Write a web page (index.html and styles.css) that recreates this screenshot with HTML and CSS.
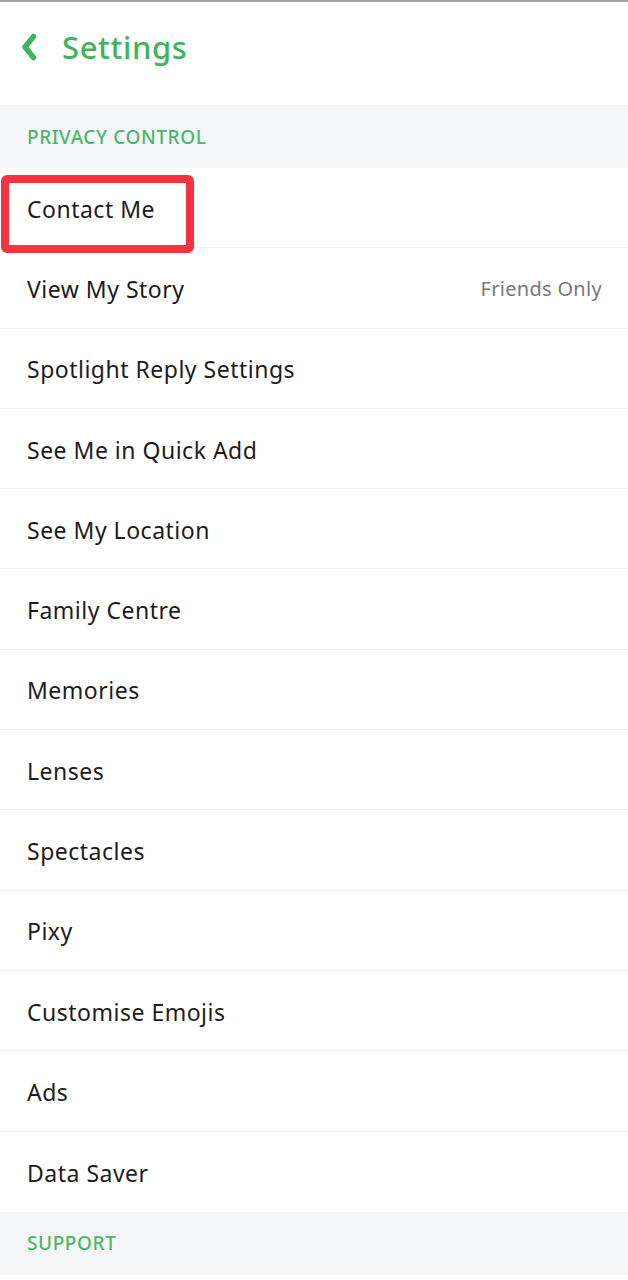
FILE: index.html
```html
<!DOCTYPE html>
<html lang="en">
  <head>
    <meta charset="UTF-8" />
    <meta name="viewport" content="width=device-width, initial-scale=1.0" />
    <title>Settings</title>
    <link rel="stylesheet" href="styles.css">
  </head>
  <body>
    <div class="screen">
      <header class="topbar">
        <a href="#" class="back">
          <svg width="16" height="28" viewBox="0 0 16 28">
            <path d="M12.5 3.5 L4 14 L12.5 24.5" fill="none" stroke="#3db55d" stroke-width="5.5" stroke-linecap="round" stroke-linejoin="round" />
          </svg>
        </a>
        <h1>Settings</h1>
      </header>

      <div class="section">PRIVACY CONTROL</div>
      <ul class="list">
        <li class="row highlight">Contact Me</li>
        <li class="row">View My Story <span class="value">Friends Only</span></li>
        <li class="row">Spotlight Reply Settings</li>
        <li class="row">See Me in Quick Add</li>
        <li class="row">See My Location</li>
        <li class="row">Family Centre</li>
        <li class="row">Memories</li>
        <li class="row">Lenses</li>
        <li class="row">Spectacles</li>
        <li class="row">Pixy</li>
        <li class="row">Customise Emojis</li>
        <li class="row">Ads</li>
        <li class="row last">Data Saver</li>
      </ul>
      <div class="section">SUPPORT</div>
    </div>
  </body>
</html>
```

FILE: styles.css
```css
body {
  margin: 0;
  padding: 0;
  background: #fff;
  font-family: "Noto Sans", sans-serif;
  color: #1c1c1c;
}
.screen {
  width: 628px;
  border-top: 2px solid #a3a3a3;
}
.topbar {
  height: 103px;
  display: flex;
  align-items: center;
  padding: 0 0 14px 21px;
  box-sizing: border-box;
}
.back {
  display: flex;
  margin-right: 25px;
}
.topbar h1 {
  margin: 0;
  font-size: 31px;
  font-weight: 500;
  color: #3db55d;
  letter-spacing: 0.6px;
}
.section {
  height: 63px;
  display: flex;
  align-items: center;
  padding-left: 27px;
  background: #f5f6f7;
  color: #4ab76a;
  font-size: 19px;
  font-weight: 500;
  letter-spacing: 0.6px;
}
.list {
  list-style: none;
  margin: 0;
  padding: 0;
}
.row {
  height: 80.3px;
  box-sizing: border-box;
  display: flex;
  align-items: center;
  justify-content: space-between;
  padding: 2px 26px 0 27px;
  border-bottom: 1px solid #f3f3f3;
  font-size: 23px;
  letter-spacing: 0.5px;
}
.row.last {
  border-bottom: none;
}
.value {
  color: #787878;
  font-size: 20px;
  letter-spacing: 0.3px;
}
.highlight {
  position: relative;
}
.highlight::after {
  content: "";
  position: absolute;
  left: 1px;
  top: 7px;
  width: 193px;
  height: 78px;
  box-sizing: border-box;
  border: 8px solid #f5333f;
  border-radius: 6px;
}
```
